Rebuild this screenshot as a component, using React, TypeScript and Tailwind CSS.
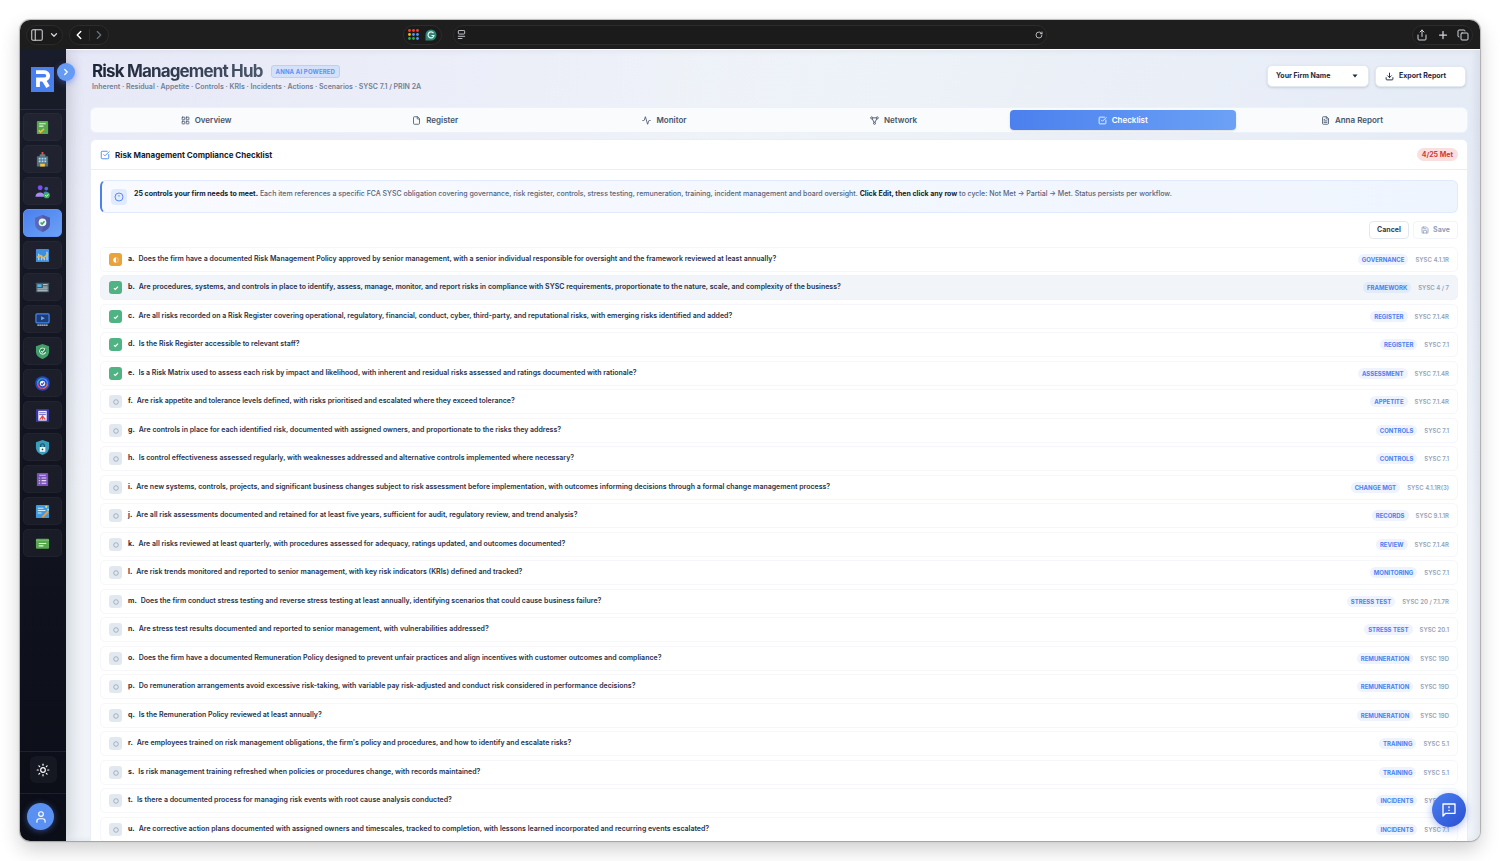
/**
 * Risk Management Hub
 *
 * Browser frame, icon sidebar and the compliance checklist page.
 */

import React, { useState } from 'react';
import {
  Activity,
  ChevronDown,
  ChevronLeft,
  ChevronRight,
  Copy,
  Download,
  File,
  FileText,
  LayoutGrid,
  PanelLeft,
  Plus,
  RotateCw,
  Save,
  Share,
  SquareCheckBig,
  Sun,
  User,
} from 'lucide-react';
import { clsx } from 'clsx';

type Status = 'unmet' | 'partial' | 'met';

interface Control {
  text: string;
  category: string;
  ref: string;
}

const CONTROLS: Control[] = [
  { text: 'Does the firm have a documented Risk Management Policy approved by senior management, with a senior individual responsible for oversight and the framework reviewed at least annually?', category: 'GOVERNANCE', ref: 'SYSC 4.1.1R' },
  { text: 'Are procedures, systems, and controls in place to identify, assess, manage, monitor, and report risks in compliance with SYSC requirements, proportionate to the nature, scale, and complexity of the business?', category: 'FRAMEWORK', ref: 'SYSC 4 / 7' },
  { text: 'Are all risks recorded on a Risk Register covering operational, regulatory, financial, conduct, cyber, third-party, and reputational risks, with emerging risks identified and added?', category: 'REGISTER', ref: 'SYSC 7.1.4R' },
  { text: 'Is the Risk Register accessible to relevant staff?', category: 'REGISTER', ref: 'SYSC 7.1' },
  { text: 'Is a Risk Matrix used to assess each risk by impact and likelihood, with inherent and residual risks assessed and ratings documented with rationale?', category: 'ASSESSMENT', ref: 'SYSC 7.1.4R' },
  { text: 'Are risk appetite and tolerance levels defined, with risks prioritised and escalated where they exceed tolerance?', category: 'APPETITE', ref: 'SYSC 7.1.4R' },
  { text: 'Are controls in place for each identified risk, documented with assigned owners, and proportionate to the risks they address?', category: 'CONTROLS', ref: 'SYSC 7.1' },
  { text: 'Is control effectiveness assessed regularly, with weaknesses addressed and alternative controls implemented where necessary?', category: 'CONTROLS', ref: 'SYSC 7.1' },
  { text: 'Are new systems, controls, projects, and significant business changes subject to risk assessment before implementation, with outcomes informing decisions through a formal change management process?', category: 'CHANGE MGT', ref: 'SYSC 4.1.1R(3)' },
  { text: 'Are all risk assessments documented and retained for at least five years, sufficient for audit, regulatory review, and trend analysis?', category: 'RECORDS', ref: 'SYSC 9.1.1R' },
  { text: 'Are all risks reviewed at least quarterly, with procedures assessed for adequacy, ratings updated, and outcomes documented?', category: 'REVIEW', ref: 'SYSC 7.1.4R' },
  { text: 'Are risk trends monitored and reported to senior management, with key risk indicators (KRIs) defined and tracked?', category: 'MONITORING', ref: 'SYSC 7.1' },
  { text: 'Does the firm conduct stress testing and reverse stress testing at least annually, identifying scenarios that could cause business failure?', category: 'STRESS TEST', ref: 'SYSC 20 / 7.1.7R' },
  { text: 'Are stress test results documented and reported to senior management, with vulnerabilities addressed?', category: 'STRESS TEST', ref: 'SYSC 20.1' },
  { text: 'Does the firm have a documented Remuneration Policy designed to prevent unfair practices and align incentives with customer outcomes and compliance?', category: 'REMUNERATION', ref: 'SYSC 19D' },
  { text: 'Do remuneration arrangements avoid excessive risk-taking, with variable pay risk-adjusted and conduct risk considered in performance decisions?', category: 'REMUNERATION', ref: 'SYSC 19D' },
  { text: 'Is the Remuneration Policy reviewed at least annually?', category: 'REMUNERATION', ref: 'SYSC 19D' },
  { text: "Are employees trained on risk management obligations, the firm's policy and procedures, and how to identify and escalate risks?", category: 'TRAINING', ref: 'SYSC 5.1' },
  { text: 'Is risk management training refreshed when policies or procedures change, with records maintained?', category: 'TRAINING', ref: 'SYSC 5.1' },
  { text: 'Is there a documented process for managing risk events with root cause analysis conducted?', category: 'INCIDENTS', ref: 'SYSC 7.1' },
  { text: 'Are corrective action plans documented with assigned owners and timescales, tracked to completion, with lessons learned incorporated and recurring events escalated?', category: 'INCIDENTS', ref: 'SYSC 7.1' },
];

const INITIAL_STATUS: Status[] = CONTROLS.map((_, i) => (i === 0 ? 'partial' : i < 5 ? 'met' : 'unmet'));

const NEXT_STATUS: Record<Status, Status> = { unmet: 'partial', partial: 'met', met: 'unmet' };

// Three linked nodes, two on top and one below
const NodesIcon: React.FC<{ className?: string }> = ({ className }) => (
  <svg viewBox="0 0 24 24" className={className} fill="none" stroke="currentColor" strokeWidth="2.400">
    <circle cx="4.500" cy="5" r="2.700" />
    <circle cx="19.500" cy="5" r="2.700" />
    <circle cx="12" cy="19.500" r="2.700" />
    <path d="M7.200 5h9.600M6 7.500l4.800 9.500M18 7.500L13.200 17" />
  </svg>
);

const TABS: { label: string; icon: React.ElementType }[] = [
  { label: 'Overview', icon: LayoutGrid },
  { label: 'Register', icon: File },
  { label: 'Monitor', icon: Activity },
  { label: 'Network', icon: NodesIcon },
  { label: 'Checklist', icon: SquareCheckBig },
  { label: 'Anna Report', icon: FileText },
];

/* Sidebar artwork, all on a 16 x 16 grid */
const NAV_ITEMS: { label: string; art: React.ReactNode }[] = [
  {
    label: 'Tasks',
    art: (
      <>
        <rect x="2" y="1" width="12" height="14" rx="1" fill="#57a84f" />
        <path d="M4.500 4h7M4.500 6.500h4.500" stroke="#e3f3df" strokeWidth="1.200" />
        <path d="M4 11l2 2 3.500-3.500" stroke="#f6bd34" strokeWidth="1.700" fill="none" />
      </>
    ),
  },
  {
    label: 'Firm',
    art: (
      <>
        <path d="M8 0v4" stroke="#e8553a" strokeWidth="2" />
        <rect x="5" y="2.500" width="6" height="3" fill="#6b7f8f" />
        <rect x="2" y="4.500" width="12" height="11" rx="0.500" fill="#56707f" />
        <path d="M4 7h8M4 10h8" stroke="#a8dcf5" strokeWidth="1.800" strokeDasharray="2 1" />
        <rect x="5.500" y="12.500" width="5" height="3" fill="#f5c244" />
      </>
    ),
  },
  {
    label: 'People',
    art: (
      <>
        <circle cx="5.500" cy="4" r="2.600" fill="#7c4df0" />
        <circle cx="12" cy="4.800" r="2" fill="#4f6fe6" />
        <path d="M0.500 13.500c0-6 10-6 10 0z" fill="#a98af3" />
        <path d="M9 8.500c3-1.500 6 0 6.500 3l-4 1z" fill="#4f6fe6" />
        <circle cx="12.500" cy="12" r="3.300" fill="#34b45a" />
        <path d="M11 12l1.200 1.200 2-2.200" stroke="#fff" strokeWidth="1" fill="none" />
      </>
    ),
  },
  {
    label: 'Risk',
    art: (
      <>
        <path d="M8 0l7 2.500v5.500c0 4-3 6.500-7 8-4-1.500-7-4-7-8v-5.500z" fill="#5a68b8" />
        <path d="M8 0l7 2.500v5.500c0 4-3 6.500-7 8z" fill="#4c5aa8" />
        <circle cx="8" cy="7" r="3.600" fill="#eef4f5" />
        <path d="M6.200 7l1.400 1.500 2.300-2.700" stroke="#38a85c" strokeWidth="1.500" fill="none" />
      </>
    ),
  },
  {
    label: 'Analytics',
    art: (
      <>
        <rect x="1" y="1" width="14" height="14" rx="1" fill="#3f8fe0" />
        <path d="M4 13V6M7 13V8M10 13V9M12.800 13V4" stroke="#a7d3f7" strokeWidth="1.500" />
        <path d="M2 10l4-2 3 3 5-5" stroke="#f2b63b" strokeWidth="1.400" fill="none" />
      </>
    ),
  },
  {
    label: 'News',
    art: (
      <>
        <rect x="1" y="3" width="14" height="10" rx="0.500" fill="#455a64" />
        <rect x="2.500" y="4.500" width="4.500" height="3" fill="#4fb3ea" />
        <path d="M8.500 5h5M8.500 7.500h5M2.500 9.500h11M2.500 11.500h11" stroke="#d5dfe4" strokeWidth="1" />
      </>
    ),
  },
  {
    label: 'Training',
    art: (
      <>
        <rect x="1" y="2" width="14" height="9.500" rx="1" fill="#1f3d73" stroke="#4287f5" strokeWidth="1.300" />
        <path d="M6.500 4.500l4 2.200-4 2.200z" fill="#69a9f8" />
        <path d="M2.500 14h11" stroke="#b4d1fb" strokeWidth="1.500" strokeDasharray="2 0.300" />
      </>
    ),
  },
  {
    label: 'Assurance',
    art: (
      <>
        <path d="M8 0l7 2.500v5.500c0 4-3 6.500-7 8-4-1.500-7-4-7-8v-5.500z" fill="#43a06b" />
        <circle cx="8" cy="7.500" r="4" fill="#2a7f4e" />
        <path d="M10.800 5.500a3.300 3.300 0 1 0 .5 3M6.500 7.500l1.300 1.300 2.700-3" stroke="#d9f5e3" strokeWidth="1.100" fill="none" />
      </>
    ),
  },
  {
    label: 'Goals',
    art: (
      <>
        <circle cx="8" cy="8" r="7.800" fill="#2348c4" />
        <path d="M8 2.800a5.200 5.200 0 0 1 5.200 5.200" stroke="#4d8df6" strokeWidth="1.500" fill="none" />
        <path d="M13.200 8a5.200 5.200 0 0 1-5.200 5.200" stroke="#ee6a4a" strokeWidth="1.500" fill="none" />
        <path d="M8 13.200a5.200 5.200 0 0 1-5.200-5.200" stroke="#ee4d6d" strokeWidth="1.500" fill="none" />
        <path d="M2.800 8a5.200 5.200 0 0 1 5.200-5.200" stroke="#38b4a0" strokeWidth="1.500" fill="none" />
        <circle cx="8" cy="8" r="2.900" fill="#f2f5ff" />
        <path d="M6.500 8l1.200 1.200 2-2.400" stroke="#2348c4" strokeWidth="1.200" fill="none" />
      </>
    ),
  },
  {
    label: 'Reports',
    art: (
      <>
        <rect x="1" y="1" width="14" height="14" rx="1" fill="#3936a3" />
        <rect x="3.500" y="3" width="9" height="10.500" fill="#f1f0fb" />
        <path d="M4.500 5h7M4.500 7h7" stroke="#6c68c7" strokeWidth="1" />
        <path d="M5 12.500l3-4 3 4M8 8.500v4" stroke="#e04848" strokeWidth="1.300" fill="none" />
      </>
    ),
  },
  {
    label: 'Security',
    art: (
      <>
        <path d="M8 0l7 2.500v5.500c0 4-3 6.500-7 8-4-1.500-7-4-7-8v-5.500z" fill="#3b9dbd" />
        <path d="M6 8V6a2 2 0 0 1 4 0v2" stroke="#1d4e66" strokeWidth="1.300" fill="none" />
        <rect x="5" y="7.500" width="6" height="5" rx="0.600" fill="#f3fafc" />
        <circle cx="8" cy="10" r="0.900" fill="#1d4e66" />
      </>
    ),
  },
  {
    label: 'Checklists',
    art: (
      <>
        <rect x="2" y="1" width="12" height="14" rx="1" fill="#7a50bd" />
        <path d="M4.500 3.500h7" stroke="#cdb6ef" strokeWidth="1.200" />
        <path d="M7 6.500h5M7 9.200h5M7 12h5" stroke="#e5daf7" strokeWidth="1.100" />
        <path d="M4 6.500h1.500M4 12h1.500" stroke="#7bd88b" strokeWidth="1.400" />
        <path d="M4 9.200h1.500" stroke="#f4c84d" strokeWidth="1.400" />
      </>
    ),
  },
  {
    label: 'Policies',
    art: (
      <>
        <rect x="1" y="1" width="14" height="14" rx="1" fill="#3f9be0" />
        <path d="M3 4.500h6M3 7h8M3 9.500h4" stroke="#d5ecfb" strokeWidth="1.100" />
        <path d="M8 14l6-6" stroke="#f29a35" strokeWidth="2" />
        <circle cx="12" cy="3" r="1.200" fill="#f8d55c" />
        <circle cx="14" cy="6" r="1" fill="#f8d55c" />
      </>
    ),
  },
  {
    label: 'Messages',
    art: (
      <>
        <rect x="1" y="3" width="14" height="10.500" rx="1" fill="#57a84f" />
        <path d="M1 4.500h14" stroke="#7cc473" strokeWidth="1" />
        <path d="M4 8h8M4 10.500h5" stroke="#e3f3df" strokeWidth="1.200" />
      </>
    ),
  },
];

const APP_DOTS = ['#ea4335', '#ea4335', '#ea4335', '#fbbc04', '#5b93f5', '#5b93f5', '#34a853', '#34a853', '#5b93f5'];

const pill = 'flex h-5 items-center rounded-full border border-[#2c2c2c] bg-[#1b1b1b]';

const BrowserBar: React.FC = () => (
  <div className="grid h-[29px] shrink-0 grid-cols-[377fr_644fr_426fr] items-center bg-[#1e1e1e] pr-[7px] pl-[6px] text-gray-300">
    <div className="flex items-center gap-1.5">
      <div className={clsx(pill, 'w-[37px] justify-between px-[3px]')}>
        <button type="button" aria-label="Show sidebar"><PanelLeft className="size-3.5" strokeWidth={1.8} /></button>
        <button type="button" aria-label="Tab groups"><ChevronDown className="size-2.5" strokeWidth={3} /></button>
      </div>
      <div className={clsx(pill, 'w-10 justify-between px-0.5')}>
        <button type="button" aria-label="Back"><ChevronLeft className="size-3.5 text-white" strokeWidth={2.5} /></button>
        <span className="h-3 w-px bg-[#2c2c2c]" />
        <button type="button" aria-label="Forward"><ChevronRight className="size-3.5 text-gray-500" /></button>
      </div>
    </div>
    <div className="flex items-center gap-[11px]">
      <div className={clsx(pill, 'w-[39px] justify-between px-1')}>
        <button type="button" aria-label="Apps">
          <svg viewBox="0 0 11 11" className="size-[11px]">
            {APP_DOTS.map((color, i) => (
              <circle key={i} cx={1.500 + (i % 3) * 4} cy={1.500 + Math.floor(i / 3) * 4} r="1.400" fill={color} />
            ))}
          </svg>
        </button>
        <button type="button" aria-label="Writing assistant">
          <svg viewBox="0 0 12 12" className="size-3" fill="none">
            <path d="M6 .5A5.500 5.500 0 1 1 6 11.500H.5V6A5.500 5.500 0 0 1 6 .5z" fill="#2f8574" />
            <path d="M8.500 4.200A3 3 0 1 0 9 6.500H6.500" stroke="#e6f5f1" strokeWidth="1.200" />
          </svg>
        </button>
      </div>
      <div className={clsx(pill, 'flex-1 justify-between px-[3px]')}>
        <svg viewBox="0 0 10 10" className="size-[9px]" fill="none" stroke="currentColor">
          <rect x="1.500" y="0.500" width="7" height="4" rx="0.800" />
          <path d="M1 7h8M1 9.500h5" />
        </svg>
        <button type="button" aria-label="Reload"><RotateCw className="size-2" strokeWidth={2.5} /></button>
      </div>
    </div>
    <div className="flex justify-end">
      <div className={clsx(pill, 'w-[61px] justify-between px-[3px]')}>
        <button type="button" aria-label="Share"><Share className="size-3" /></button>
        <button type="button" aria-label="New tab"><Plus className="size-3" strokeWidth={2.5} /></button>
        <button type="button" aria-label="Tabs"><Copy className="size-3" /></button>
      </div>
    </div>
  </div>
);

const Sidebar: React.FC = () => (
  <aside className="relative z-10 flex w-[46px] shrink-0 flex-col bg-linear-to-b from-[#191c2a] to-[#0b0e17] shadow-[3px_0_16px_rgba(15,20,30,0.18)]">
    <div className="flex h-[61px] items-center justify-center border-b border-white/8 pr-0.5">
      <svg viewBox="0 0 23 25" className="h-[25px] w-[23px]" fill="none" stroke="#fff">
        <rect width="23" height="25" fill="#4a80ee" stroke="none" />
        <path d="M5 5.200H13.500a3.300 3.300 0 0 1 0 7.300H7V20" strokeWidth="3.800" />
        <path d="M12.500 12.500l4.500 7.500" strokeWidth="4" />
      </svg>
    </div>
    <button
      type="button"
      aria-label="Expand sidebar"
      className="absolute top-[14px] -right-[9px] flex size-[18px] items-center justify-center rounded-full bg-[#649bf5] text-white shadow-[0_2px_6px_rgba(79,110,240,0.5)]"
    >
      <ChevronRight className="size-2.5" strokeWidth={3} />
    </button>
    <nav className="flex flex-1 flex-col gap-1 px-[3px] pt-[3px]">
      {NAV_ITEMS.map((item) => (
        <a
          key={item.label}
          href="#"
          aria-label={item.label}
          className={clsx(
            'flex h-7 w-[39px] items-center justify-center rounded-[5px] border',
            item.label === 'Risk'
              ? 'border-[#5d93f5] bg-linear-to-br from-[#4b80ee] to-[#6ca1f6]'
              : 'border-white/3 bg-white/4',
          )}
        >
          <svg viewBox="0 0 16 16" className={item.label === 'Risk' ? 'size-[17px]' : 'size-[15px]'}>{item.art}</svg>
        </a>
      ))}
    </nav>
    <div className="flex h-[42px] items-start justify-center border-t border-white/8 pt-1">
      <button type="button" aria-label="Toggle theme" className="flex size-[27px] items-center justify-center rounded-md bg-white/4 text-white">
        <Sun className="size-3.5" />
      </button>
    </div>
    <div className="flex h-12 items-start border-t border-white/8 pt-[9px] pl-[7px]">
      <button type="button" aria-label="Account" className="flex size-[27px] items-center justify-center rounded-full bg-[#5b90f3] text-white shadow-[0_1px_6px_rgba(91,130,243,0.5)]">
        <User className="size-3.5" />
      </button>
    </div>
  </aside>
);

const StatusBox: React.FC<{ status: Status }> = ({ status }) => (
  <span
    className={clsx(
      'flex size-[13px] shrink-0 items-center justify-center rounded-[3px]',
      status === 'partial' && 'bg-[#eaa23a]',
      status === 'met' && 'bg-[#4fb383]',
      status === 'unmet' && 'bg-[#e2e8f0]',
    )}
  >
    <svg viewBox="0 0 8 8" className="size-2" fill="none">
      {status === 'partial' && (
        <>
          <circle cx="4" cy="4" r="2.400" stroke="#f7d9a8" strokeWidth="0.600" />
          <path d="M4 1.400a2.600 2.600 0 0 0 0 5.200z" fill="#fff" />
        </>
      )}
      {status === 'met' && <path d="M2 4.200l1.400 1.300 2.600-2.900" stroke="#fff" strokeWidth="1.200" />}
      {status === 'unmet' && <circle cx="4" cy="4" r="2.300" stroke="#94a3b8" strokeWidth="0.800" />}
    </svg>
  </span>
);

const App: React.FC = () => {
  const [activeTab, setActiveTab] = useState('Checklist');
  const [statuses, setStatuses] = useState<Status[]>(INITIAL_STATUS);

  const metCount = statuses.filter((s) => s === 'met').length;

  // Not Met -> Partial -> Met -> Not Met
  const cycleStatus = (index: number) => {
    setStatuses((prev) => prev.map((s, i) => (i === index ? NEXT_STATUS[s] : s)));
  };

  return (
    <div className="h-screen bg-white p-5 font-[Inter,sans-serif] text-slate-800">
      <div className="relative flex h-full flex-col overflow-hidden rounded-[10px] shadow-[0_0_1px_1px_rgba(0,0,0,0.25),0_8px_20px_rgba(0,0,0,0.2)]">
        <BrowserBar />
        <div className="flex min-h-0 flex-1">
          <Sidebar />

          <main className="min-w-0 flex-1 overflow-hidden border-t border-white bg-[#f0f4f9] bg-[radial-gradient(ellipse_at_0%_0%,#e7e8f7_0%,transparent_40%),radial-gradient(ellipse_at_100%_10%,#e5ebf6_0%,transparent_40%)] pr-3 pl-6 shadow-[inset_-4px_0_6px_rgba(100,116,139,0.12)]">
            {/* Page header */}
            <header className="flex items-start justify-between pt-[11px] pr-0.5 pl-0.5">
              <div>
                <div className="flex items-center gap-2">
                  <h1 className="bg-linear-to-r from-[#1b2536] to-[#4a566a] bg-clip-text text-[17px] leading-[20px] font-bold tracking-tighter text-transparent">
                    Risk Management Hub
                  </h1>
                  <span className="rounded-[3px] border border-[#b9d0fa] bg-[#d5e1f8] px-1 text-[6px] leading-[11px] font-bold tracking-wide text-[#5d92f4]">
                    ANNA AI POWERED
                  </span>
                </div>
                <p className="text-[7px] leading-[12px] font-semibold text-[#718096]">
                  Inherent · Residual · Appetite · Controls · KRIs · Incidents · Actions · Scenarios · SYSC 7.1 / PRIN 2A
                </p>
              </div>
              <div className="flex items-center gap-1.5 pt-1">
                <div className="relative flex">
                  <select
                    aria-label="Firm"
                    className="h-[22px] w-[102px] appearance-none rounded-[5px] border border-slate-200 bg-white pl-2 text-[7px] font-bold shadow-sm"
                  >
                    <option>Your Firm Name</option>
                  </select>
                  <svg viewBox="0 0 6 4" className="pointer-events-none absolute top-[9px] right-[11px] h-1 w-1.5">
                    <path d="M.5.5h5L3 3.500z" fill="#1e293b" />
                  </svg>
                </div>
                <button type="button" className="flex h-[21px] w-[91px] items-center gap-[5px] rounded-[5px] border border-slate-200 bg-white pl-[9px] text-[7px] font-bold shadow-sm">
                  <Download className="size-[9px]" strokeWidth={2.5} />
                  Export Report
                </button>
              </div>
            </header>

            {/* Tabs */}
            <div role="tablist" className="mt-3.5 flex gap-[3px] rounded-md border border-[#edf1f8] bg-[#f9fbfd] p-0.5">
              {TABS.map(({ label, icon: Icon }) => (
                <button
                  key={label}
                  type="button"
                  role="tab"
                  aria-selected={activeTab === label}
                  onClick={() => setActiveTab(label)}
                  className={clsx(
                    'flex h-5 flex-1 items-center justify-center gap-[5px] rounded-[4px] text-[8px] font-semibold',
                    activeTab === label
                      ? 'bg-linear-to-r from-[#4b80ee] to-[#6ca1f6] text-white shadow-sm'
                      : 'text-[#475569]',
                  )}
                >
                  <Icon className="size-[9px]" strokeWidth={2.2} />
                  {label}
                </button>
              ))}
            </div>

            {/* Checklist card */}
            <section className="mt-1.5 rounded-md border border-[#e9eef6] bg-white">
              <div className="flex h-[30px] items-center border-b border-[#e9eef6] px-[9px]">
                <SquareCheckBig className="mr-[5px] size-2.5 text-[#5d92f4]" strokeWidth={2.4} />
                <h2 className="text-[8px] font-bold text-[#151d2e]">Risk Management Compliance Checklist</h2>
                <span className="ml-auto rounded-full bg-[#fadfdf] px-[5px] text-[7px] leading-[13px] font-bold text-[#cf3a3a]">
                  {metCount}/25 Met
                </span>
              </div>

              <div className="px-[9px] pt-[10px]">
                <div className="flex h-[33px] items-start gap-[7px] rounded-md border border-l-2 border-[#e0eafc] border-l-[#4b80ee] bg-linear-to-r from-[#f8faff] to-[#eff5fe] px-[9px] pt-[7px]">
                  <span className="mt-px flex size-4 items-center justify-center rounded-[4px] bg-[#e2ebfd] text-[#4b80ee]">
                    <svg viewBox="0 0 10 10" className="size-2.5" fill="none">
                      <circle cx="5" cy="5" r="4" stroke="currentColor" strokeWidth="0.900" />
                      <path d="M5 3v1.700" stroke="currentColor" strokeWidth="0.800" />
                    </svg>
                  </span>
                  <p className="text-[7px] leading-[12px] font-medium text-[#56637a]">
                    <strong className="font-bold text-[#151d2e]">25 controls your firm needs to meet.</strong> Each item references a
                    specific FCA SYSC obligation covering governance, risk register, controls, stress testing, remuneration, training,
                    incident management and board oversight.{' '}
                    <strong className="font-bold text-[#151d2e]">Click Edit, then click any row</strong> to cycle: Not Met → Partial →
                    Met. Status persists per workflow.
                  </p>
                </div>

                <div className="flex justify-end gap-1 py-2 text-[7px] font-bold">
                  <button type="button" className="h-[18px] w-10 rounded-[4px] border border-slate-200 bg-white text-slate-700">
                    Cancel
                  </button>
                  <button type="button" className="flex h-[18px] w-[45px] items-center justify-center gap-1 rounded-[4px] border border-slate-100 bg-white text-slate-400">
                    <Save className="size-2" strokeWidth={2.5} />
                    Save
                  </button>
                </div>

                <ul>
                  {CONTROLS.map((control, i) => (
                    <li key={control.text} className="odd:mb-[3px] even:mb-1">
                      <button
                        type="button"
                        onClick={() => cycleStatus(i)}
                        className={clsx(
                          'flex h-[25px] w-full items-center rounded-[5px] border px-2 text-left',
                          i === 1 ? 'border-[#eff3f8] bg-[#f1f4f9]' : 'border-[#f5f7fa] bg-white',
                        )}
                      >
                        <StatusBox status={statuses[i]} />
                        <span className="ml-1.5 text-[7px] font-bold text-[#1e293b]">{String.fromCharCode(97 + i)}.</span>
                        <span className="ml-1 flex-1 truncate text-[7px] font-semibold text-[#27324a]">{control.text}</span>
                        <span className={clsx('rounded-full px-1 text-[6px] leading-[11px] font-bold text-[#4b80ee]', i === 1 ? 'bg-[#e3ebf8]' : 'bg-[#eef3fe]')}>
                          {control.category}
                        </span>
                        <span className="ml-[7px] text-[6px] font-semibold text-[#94a3b8]">{control.ref}</span>
                      </button>
                    </li>
                  ))}
                </ul>
              </div>
            </section>
          </main>
        </div>

        {/* Feedback button floats over the page */}
        <button
          type="button"
          aria-label="Send feedback"
          className="absolute right-[14px] bottom-[14px] z-20 flex size-[34px] items-center justify-center rounded-full bg-linear-to-br from-[#4b80f0] to-[#2c4fd2] text-white shadow-[0_2px_8px_rgba(59,100,230,0.45)]"
        >
          <svg viewBox="0 0 24 24" className="size-4" fill="none" stroke="currentColor" strokeWidth="2" strokeLinejoin="round">
            <path d="M3 3h18v14H7l-4 4z" />
            <path d="M12 6.500v3M12 11.500v2" />
          </svg>
        </button>
      </div>
    </div>
  );
};

export default App;
